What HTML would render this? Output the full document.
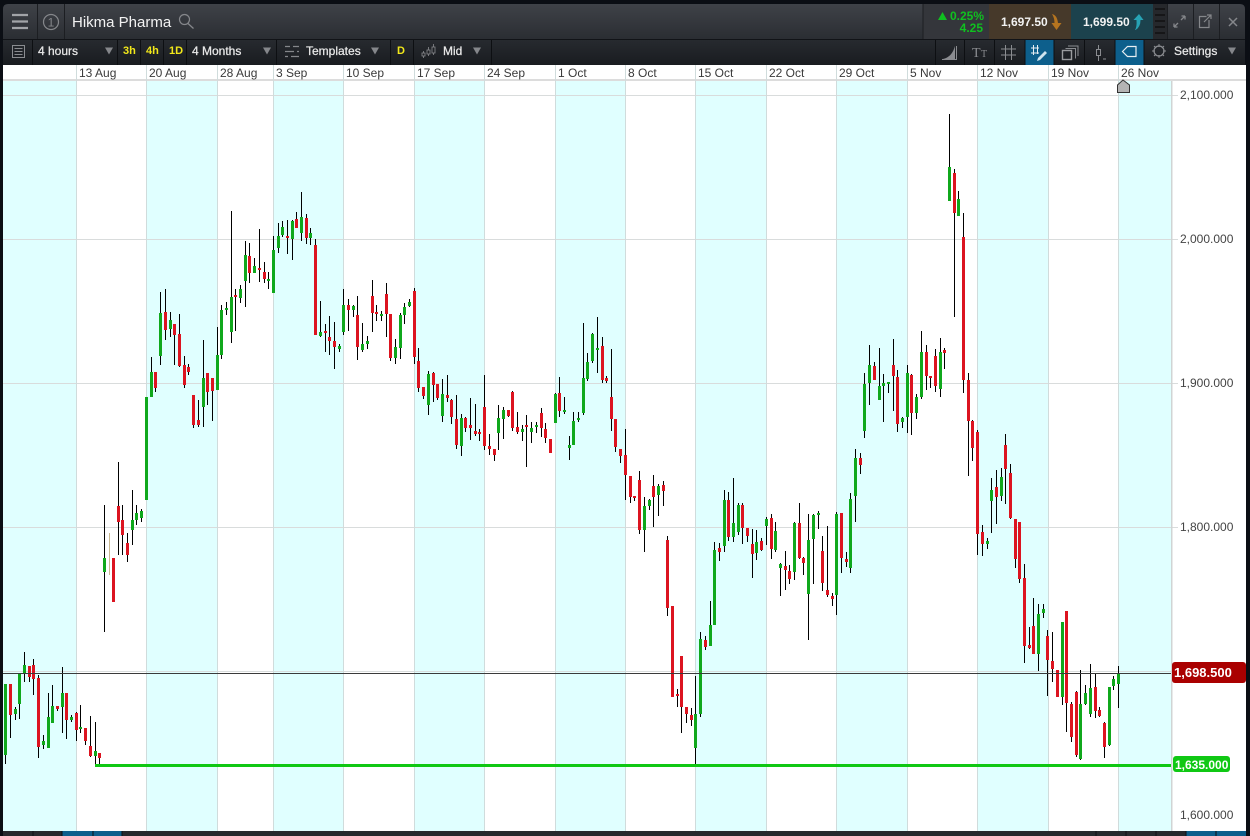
<!DOCTYPE html>
<html lang="en"><head><meta charset="utf-8"><title>Hikma Pharma</title>
<style>
html,body{margin:0;padding:0;width:1250px;height:836px;overflow:hidden;background:#0b0e14}
svg{position:absolute;left:0;top:0;display:block}
text{font-family:"Liberation Sans",Arial,sans-serif;font-size:12px}
.w{fill:#e8e8e8;stroke:#e8e8e8;stroke-width:.25px}.d{fill:#3a3a3a}.a{fill:#444}.y{fill:#f2e81a;font-weight:bold;font-size:11px}
</style></head><body>
<svg width="1250" height="836" viewBox="0 0 1250 836" xmlns="http://www.w3.org/2000/svg">
<defs><linearGradient id="h" x1="0" y1="0" x2="0" y2="1"><stop offset="0" stop-color="#3f4248"/><stop offset="1" stop-color="#2a2d32"/></linearGradient>
<linearGradient id="t" x1="0" y1="0" x2="0" y2="1"><stop offset="0" stop-color="#272a2f"/><stop offset="1" stop-color="#191c20"/></linearGradient></defs>
<rect width="1250" height="836" fill="#0b0e14"/>
<path d="M3 40V9q0-5 5-5H1240q5 0 5 5V40Z" fill="url(#h)"/>
<rect x="923" y="4" width="66" height="35" fill="#34363b"/>
<rect x="989" y="4" width="82" height="35" fill="#46392a"/>
<rect x="1071" y="4" width="82" height="35" fill="#1c424d"/>
<rect x="1153" y="4" width="14" height="35" fill="#26282c"/>
<path d="M1155 9h10M1155 15h10M1155 21h10M1155 27h10M1155 33h10" stroke="#111" stroke-width="1.5"/>
<path d="M37.500 4V39M64.500 4V39M923 4V39M1167.500 4V39M1193.500 4V39M1219.500 4V39" stroke="#1c1e22"/>
<path d="M12 15h16M12 21.500h16M12 28h16" stroke="#a2a4a8" stroke-width="2.300"/>
<circle cx="51" cy="22" r="7.500" fill="none" stroke="#85878b" stroke-width="1.200"/>
<text x="51" y="26.500" text-anchor="middle" fill="#85878b" style="font-size:12px">1</text>
<text x="72" y="27" fill="#f2f2f2" style="font-size:15px">Hikma Pharma</text>
<circle cx="184.500" cy="19.500" r="5" fill="none" stroke="#85878b" stroke-width="1.200"/><path d="M188 23.500l5.500 5" stroke="#85878b" stroke-width="1.300"/>
<path d="M938 20l4.500-8 4.500 8z" fill="#10c020"/>
<text x="950" y="20" fill="#10c020" style="font-weight:bold">0.25%</text>
<text x="983" y="32" text-anchor="end" fill="#10c020" style="font-weight:bold">4.25</text>
<text x="1001" y="26" fill="#f2f2f2" style="font-weight:bold">1,697.50</text>
<path d="M1052 14q5 1 6 9h3.500l-5 7-5-7h3q0-5-2.500-9z" fill="#b5741f"/>
<text x="1083" y="26" fill="#f2f2f2" style="font-weight:bold">1,699.50</text>
<path d="M1135 30q2-3 1.500-10h-3l5.500-6 4.500 6h-3q0 7-5 10z" fill="#27a3b5"/>
<path d="M1174 27l4-4M1174 27v-3.500M1174 27h3.500M1185 16l-4 4M1185 16v3.500M1185 16h-3.500" stroke="#85878b" stroke-width="1.300" fill="none"/>
<path d="M1209 20v7.500h-9.500v-11h7" stroke="#85878b" stroke-width="1.200" fill="none"/><path d="M1204 22l7-7M1207 15h4v4" stroke="#85878b" stroke-width="1.200" fill="none"/>
<path d="M1229 18l8 8M1237 18l-8 8" stroke="#85878b" stroke-width="1.500"/>
<rect x="3" y="40" width="1242" height="25" fill="url(#t)"/>
<rect x="3" y="39" width="1242" height="1" fill="#111317"/>
<rect x="1025" y="40" width="29" height="25" fill="#0d5f8c"/><rect x="1115" y="40" width="29" height="25" fill="#0d5f8c"/>
<path d="M32.500 40V65M117.500 40V65M140.500 40V65M163.500 40V65M186.500 40V65M276.500 40V65M390.500 40V65M413.500 40V65M491.500 40V65M935.500 40V65M964.500 40V65M994.500 40V65M1025 40V65M1054 40V65M1084.500 40V65M1115 40V65M1144 40V65" stroke="#0d0f12"/>
<rect x="12.500" y="45.500" width="12" height="12" fill="none" stroke="#8a8c90"/><path d="M14.500 48.500h8M14.500 51.500h8M14.500 54.500h8" stroke="#8a8c90"/>
<text x="38" y="55" class="w">4 hours</text>
<path d="M105 47.500h8l-4 7z" fill="#85878b"/>
<text x="123" y="54" class="y">3h</text><text x="146" y="54" class="y">4h</text><text x="169" y="54" class="y">1D</text>
<text x="192" y="55" class="w">4 Months</text>
<path d="M263 47.500h8l-4 7z" fill="#85878b"/>
<path d="M285 46.500h5M293 46.500h6M285 51.500h9M297 51.500h2M285 56.500h3M291 56.500h8" stroke="#85878b" stroke-width="1.200"/>
<text x="306" y="55" class="w">Templates</text>
<path d="M371 47.500h8l-4 7z" fill="#85878b"/>
<text x="397" y="54" class="y">D</text>
<g fill="none" stroke="#8a8c90" stroke-width=".8"><path d="M423.500 51v7M428.500 47v9M433.500 44v11"/><rect x="422" y="53" width="3" height="3" fill="#1f2226"/><rect x="427" y="50" width="3" height="4" fill="#1f2226"/><rect x="432" y="47" width="3" height="6" fill="#1f2226"/></g>
<text x="443" y="55" class="w">Mid</text>
<path d="M473 47.500h8l-4 7z" fill="#85878b"/>
<path d="M943 59q9-2 12-13v13z" fill="#8a8c90"/><path d="M942 59.500h14.500V46" stroke="#8a8c90" fill="none"/>
<text x="972" y="57" fill="#8a8c90" style="font-family:'Liberation Serif',serif;font-size:14px">T</text><text x="981" y="57" fill="#8a8c90" style="font-family:'Liberation Serif',serif;font-size:10px">T</text>
<path d="M1001 49h15M1001 55h15M1005.500 45v15M1011.500 45v15" stroke="#8a8c90"/>
<path d="M1031 48h8M1031 53h8M1033.500 45v10M1037.500 45v9" stroke="#e8eef2"/><path d="M1038 58l7-7 2 2-7 7-3 1z" fill="#cfe4ef"/>
<path d="M1065.500 48.500h10v10M1068 46h10v10" stroke="#8a8c90" fill="none"/><rect x="1062.500" y="50.500" width="9" height="9" fill="none" stroke="#9a9c9f" stroke-width="1.400"/>
<rect x="1096.500" y="49.500" width="4" height="6" fill="none" stroke="#8a8c90"/><path d="M1098.500 45v4M1098.500 56v5M1103 59h3" stroke="#8a8c90"/>
<path d="M1122.500 51.500l5-5h8.500v10h-8.500z" fill="none" stroke="#e8eef2" stroke-width="1.200"/>
<circle cx="1159" cy="51" r="5" fill="none" stroke="#8a8c90" stroke-width="1.200"/><path d="M1159 44v3M1159 55v3M1152 51h3M1163 51h3M1154 46l2 2M1162 54l2 2M1164 46l-2 2M1156 54l-2 2" stroke="#8a8c90"/>
<text x="1174" y="55" class="w">Settings</text>
<path d="M1228 47.500h8l-4 7z" fill="#85878b"/>

<rect x="3" y="65" width="1243" height="766" fill="#fff"/>
<path d="M3 81h73v750H3zM146 81h71v750h-71zM273 81h70v750h-70zM414 81h70v750h-70zM555 81h70v750h-70zM695 81h71v750h-71zM836 81h71v750h-71zM977 81h71v750h-71zM1118 81h53v750h-53z" fill="#e0ffff"/>
<rect x="3" y="79" width="1243" height="2" fill="#dcdcdc"/>
<path d="M3 95.500H1178M3 239.500H1178M3 383.500H1178M3 527.500H1178M3 671.500H1178" stroke="#d9dcdc"/>
<path d="M76.500 65V831M146.500 65V831M217.500 65V831M273.500 65V831M343.500 65V831M414.500 65V831M484.500 65V831M555.500 65V831M625.500 65V831M695.500 65V831M766.500 65V831M836.500 65V831M907.500 65V831M977.500 65V831M1048.500 65V831M1118.500 65V831" stroke="#d0dcdc"/>
<rect x="1171" y="81" width="1.500" height="750" fill="#d0d4d4"/>
<g class="d"><text x="79" y="77" class="d">13 Aug</text><text x="149" y="77" class="d">20 Aug</text><text x="220" y="77" class="d">28 Aug</text><text x="276" y="77" class="d">3 Sep</text><text x="346" y="77" class="d">10 Sep</text><text x="417" y="77" class="d">17 Sep</text><text x="487" y="77" class="d">24 Sep</text><text x="558" y="77" class="d">1 Oct</text><text x="628" y="77" class="d">8 Oct</text><text x="698" y="77" class="d">15 Oct</text><text x="769" y="77" class="d">22 Oct</text><text x="839" y="77" class="d">29 Oct</text><text x="910" y="77" class="d">5 Nov</text><text x="980" y="77" class="d">12 Nov</text><text x="1051" y="77" class="d">19 Nov</text><text x="1121" y="77" class="d">26 Nov</text></g>
<text x="1180" y="99" class="a">2,100.000</text><text x="1180" y="243" class="a">2,000.000</text><text x="1180" y="387" class="a">1,900.000</text><text x="1180" y="531" class="a">1,800.000</text><text x="1180" y="819" class="a">1,600.000</text>

<path fill="none" stroke="#000" d="M5.500 684V764M10.500 684V738M15.500 707V720M19.500 673V719M24.500 652V682M29.500 666V682M33.500 659V695M38.500 675V758M43.500 735V749M48.500 693V748M52.500 685V723M57.500 706V711M62.500 667V733M66.500 693V739M71.500 715V722M76.500 712V741M80.500 705V733M85.500 728V745M90.500 716V757M95.500 722V765M99.500 753V765M104.500 505V632M113.500 558V602M118.500 462V555M122.500 505V555M127.500 533V562M132.500 490V545M136.500 505V525M141.500 509V522M146.500 397V500M151.500 357V397M155.500 372V392M160.500 292V365M165.500 289V340M170.500 312V337M174.500 324V365M179.500 314V367M184.500 356V388M188.500 364V375M193.500 395V428M198.500 400V427M203.500 340V427M207.500 373V405M212.500 378V421M217.500 327V390M221.500 305V359M226.500 302V315M231.500 211V343M235.500 289V331M240.500 285V303M245.500 241V307M249.500 243V283M254.500 258V273M259.500 229V282M264.500 262V283M268.500 272V289M273.500 236V293M278.500 223V253M282.500 221V237M287.500 220V254M292.500 220V260M296.500 212V228M301.500 192V241M306.500 214V244M310.500 228V245M315.500 239V335M320.500 301V337M325.500 324V352M329.500 316V355M334.500 322V369M339.500 344V352M343.500 289V335M348.500 299V331M353.500 305V317M357.500 296V360M362.500 323V352M367.500 336V349M372.500 280V332M376.500 305V321M381.500 311V321M386.500 283V337M390.500 314V361M395.500 339V364M400.500 313V359M404.500 303V324M409.500 299V307M414.500 288V364M418.500 348V392M423.500 387V399M428.500 371V415M433.500 372V402M437.500 384V400M442.500 379V422M447.500 375V402M451.500 399V424M456.500 395V449M461.500 414V456M465.500 417V432M470.500 398V440M475.500 404V436M479.500 429V441M484.500 375V450M489.500 434V455M494.500 449V461M498.500 405V450M503.500 407V439M508.500 410V417M512.500 391V431M517.500 412V434M522.500 425V441M526.500 415V467M531.500 422V443M536.500 422V433M541.500 408V437M545.500 423V443M550.500 439V453M555.500 393V423M559.500 377V417M564.500 397V414M569.500 436V460M573.500 412V445M578.500 412V422M583.500 323V415M587.500 353V381M592.500 333V363M597.500 317V373M602.500 337V383M606.500 376V383M611.500 349V431M615.500 419V452M620.500 449V463M625.500 429V500M630.500 476V503M634.500 496V501M639.500 471V534M644.500 497V552M649.500 499V510M653.500 475V527M658.500 484V516M663.500 481V506M667.500 536V616M672.500 606V697M677.500 689V707M681.500 656V733M686.500 707V723M691.500 708V726M695.500 676V764M700.500 632V717M705.500 636V650M710.500 601V646M714.500 542V625M719.500 543V561M724.500 490V552M728.500 492V541M733.500 478V542M738.500 503V535M742.500 503V544M747.500 528V542M752.500 529V578M756.500 530V560M761.500 538V551M766.500 517V545M771.500 514V559M775.500 522V552M780.500 563V596M785.500 551V590M789.500 565V584M794.500 522V580M799.500 503V559M803.500 557V575M808.500 514V640M813.500 514V584M818.500 511V529M822.500 536V591M827.500 526V597M832.500 593V606M836.500 512V615M841.500 513V573M846.500 552V567M850.500 493V573M855.500 449V522M860.500 453V474M864.500 373V438M869.500 345V405M874.500 362V380M879.500 348V400M883.500 374V422M888.500 382V393M893.500 339V411M897.500 370V432M902.500 417V428M907.500 365V433M911.500 374V435M916.500 394V419M921.500 331V399M926.500 345V390M930.500 377V388M935.500 349V392M940.500 338V397M944.500 348V369M949.500 114V201M954.500 169V317M958.500 191V216M963.500 213V393M968.500 373V476M972.500 420V461M977.500 430V555M982.500 525V556M987.500 538V549M991.500 478V533M996.500 470V524M1001.500 468V501M1005.500 434V504M1010.500 464V519M1015.500 519V568M1019.500 522V583M1024.500 564V663M1029.500 627V649M1033.500 598V654M1038.500 604V671M1043.500 604V618M1047.500 630V696M1052.500 632V682M1057.500 670V697M1062.500 622V705M1066.500 611V732M1071.500 702V742M1076.500 691V757M1080.500 670V760M1085.500 685V705M1090.500 664V717M1095.500 674V718M1099.500 707V717M1104.500 722V758M1109.500 687V746M1113.500 676V690M1118.500 666V708"/>
<path fill="none" stroke="#c8b890" d="M109.500 533V575"/>
<path fill="none" stroke="#10a81c" stroke-width="3" d="M5.500 684V755M15.500 709V714M19.500 673V704M24.500 665V673M43.500 741V745M48.500 717V748M52.500 706V723M62.500 693V707M71.500 717V720M80.500 727V729M95.500 751V756M104.500 558V572M132.500 520V530M136.500 513V520M141.500 511V518M146.500 397V500M151.500 372V397M160.500 313V356M170.500 320V329M203.500 378V407M217.500 355V390M221.500 310V355M226.500 308V310M231.500 297V332M240.500 289V298M245.500 255V281M254.500 266V273M268.500 279V281M273.500 250V293M278.500 236V248M282.500 227V235M292.500 221V239M301.500 217V233M310.500 233V238M320.500 332V336M339.500 346V349M343.500 305V332M353.500 306V310M362.500 344V350M367.500 341V344M381.500 314V316M395.500 347V358M400.500 315V348M404.500 307V315M409.500 302V306M428.500 374V405M442.500 394V416M461.500 418V446M498.500 418V433M503.500 410V419M522.500 429V432M531.500 428V432M536.500 425V427M555.500 394V423M564.500 410V412M569.500 445V448M573.500 421V445M578.500 418V420M583.500 378V413M587.500 362V379M592.500 334V361M597.500 348V350M644.500 506V530M649.500 500V506M658.500 486V495M695.500 714V748M700.500 639V714M710.500 625V646M714.500 550V625M724.500 500V546M733.500 523V537M738.500 505V532M756.500 542V553M766.500 519V526M775.500 531V550M780.500 564V568M794.500 523V572M808.500 540V594M813.500 515V539M818.500 513V515M836.500 514V595M850.500 499V568M855.500 458V496M864.500 384V431M869.500 365V383M879.500 386V400M883.500 383V386M888.500 382V384M902.500 418V422M907.500 373V417M916.500 397V413M921.500 352V397M940.500 352V389M949.500 167V201M958.500 199V216M987.500 541V544M991.500 490V501M1001.500 477V496M1038.500 614V654M1043.500 609V613M1062.500 622V697M1080.500 704V759M1085.500 693V704M1090.500 688V714M1109.500 687V745M1113.500 679V686M1118.500 674V684"/>
<path fill="none" stroke="#dc1420" stroke-width="3" d="M10.500 684V715M29.500 666V677M33.500 665V679M38.500 678V747M57.500 706V709M66.500 693V720M76.500 713V730M85.500 728V741M90.500 746V756M99.500 753V758M113.500 558V602M118.500 506V522M122.500 520V535M127.500 543V555M155.500 372V388M165.500 312V330M174.500 324V335M179.500 334V366M184.500 365V385M188.500 367V372M193.500 395V425M198.500 420V425M207.500 373V392M212.500 378V391M235.500 295V297M249.500 256V273M259.500 268V270M264.500 272V279M287.500 236V238M296.500 219V228M306.500 218V238M315.500 245V335M325.500 331V333M329.500 337V341M334.500 341V347M348.500 305V310M357.500 315V347M372.500 296V313M376.500 312V314M386.500 294V314M390.500 314V358M414.500 291V357M418.500 361V388M423.500 387V396M433.500 373V385M437.500 384V398M447.500 395V398M451.500 400V417M456.500 419V445M465.500 418V428M470.500 425V428M475.500 431V434M479.500 432V434M484.500 407V446M489.500 446V449M494.500 449V455M508.500 410V416M512.500 392V428M517.500 427V432M526.500 425V427M541.500 413V428M545.500 429V438M550.500 439V453M559.500 393V411M602.500 346V380M606.500 378V381M611.500 397V419M615.500 419V447M620.500 449V456M625.500 455V475M630.500 476V497M634.500 496V498M639.500 480V530M653.500 486V497M663.500 485V491M667.500 540V608M672.500 606V697M677.500 694V696M681.500 656V707M686.500 707V714M691.500 715V720M705.500 640V647M719.500 548V552M728.500 500V537M742.500 505V528M747.500 528V536M752.500 544V554M761.500 541V550M771.500 518V549M785.500 566V570M789.500 571V579M799.500 523V558M803.500 558V563M822.500 551V583M827.500 590V595M832.500 596V599M841.500 513V558M846.500 559V562M860.500 458V465M874.500 366V380M893.500 365V376M897.500 377V424M911.500 375V413M926.500 352V376M930.500 376V378M935.500 356V386M944.500 350V353M954.500 173V213M963.500 237V380M968.500 380V421M972.500 421V448M977.500 432V534M982.500 532V544M996.500 487V497M1005.500 445V469M1010.500 473V518M1015.500 519V559M1019.500 522V579M1024.500 578V646M1029.500 645V648M1033.500 626V654M1047.500 636V660M1052.500 661V669M1057.500 670V697M1066.500 611V703M1071.500 704V737M1076.500 692V755M1095.500 687V711M1099.500 710V716M1104.500 723V747"/>

<rect x="3" y="673" width="1168" height="1" fill="#3a3a3a"/>
<rect x="95" y="764" width="1076" height="3" fill="#10c814"/>
<path d="M1117.500 92.500V85l5.500-5 6.500 5v7.500z" fill="#b4b4b4" stroke="#333"/>
<rect x="1172" y="662" width="74" height="21" rx="3" fill="#aa0000"/>
<text x="1174" y="677" fill="#fff" style="font-weight:bold;font-size:13px">1,698.500</text>
<rect x="1173" y="756" width="57" height="16" rx="3" fill="#10c814"/>
<text x="1175" y="769" fill="#fff" style="font-weight:bold">1,635.000</text>

<rect x="0" y="831" width="1250" height="5" fill="#26292d"/>
<rect x="62" y="831" width="60" height="5" fill="#0d5f8c"/><rect x="1186" y="831" width="60" height="5" fill="#0d5f8c"/>
<path d="M33 831v5M62 831v5M93 831v5M122 831v5M1096 831v5M1126 831v5M1156 831v5M1186 831v5M1216 831v5" stroke="#0d0f12"/>
<rect x="0" y="65" width="3" height="771" fill="#0b0e14"/><rect x="1246" y="65" width="4" height="771" fill="#0b0e14"/>
</svg>
</body></html>
